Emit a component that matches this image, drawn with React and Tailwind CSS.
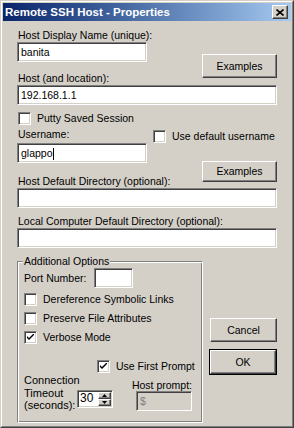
import React from 'react';

const raised = "border border-t-white border-l-white border-r-[#404040] border-b-[#404040] shadow-[inset_-1px_-1px_0_#808080,inset_1px_1px_0_#d4d0c8]";
const sunken = "border border-t-[#808080] border-l-[#808080] border-r-white border-b-white shadow-[inset_1px_1px_0_#404040,inset_-1px_-1px_0_#d4d0c8]";

function Field({ value, className = "", disabled = false }) {
	return (
		<div className={`${sunken} ${disabled ? 'bg-[#d4d0c8] text-[#808080]' : 'bg-white text-black'} h-[20px] pl-[3px] leading-[18px] ${className}`}>
			{value}
		</div>
	);
}

function Check({ checked }) {
	return (
		<div className={`${sunken} bg-white w-[13px] h-[13px] shrink-0 flex items-center justify-center`}>
			{checked && (
				<svg width="7" height="7" viewBox="0 0 7 7">
					<path d="M0 2 L0 4 L2 6 L7 1 L7 -1 L2 4 Z" fill="#000" />
				</svg>
			)}
		</div>
	);
}

function Button({ children, def = false, className = "" }) {
	return (
		<div className={`${def ? 'outline outline-1 outline-black' : ''} ${className}`}>
			<div className={`${raised} bg-[#d4d0c8] h-full flex items-center justify-center`}>{children}</div>
		</div>
	);
}

export default function App() {
	return (
		<div className="w-[294px] h-[428px] bg-[#d4d0c8] border border-t-[#d4d0c8] border-l-[#d4d0c8] border-r-[#404040] border-b-[#404040] text-[10.5px] leading-[13px] text-black overflow-hidden" style={{ fontFamily: '"Liberation Sans", Arial, sans-serif' }}>
			<div className="w-full h-full border border-t-white border-l-white border-r-[#808080] border-b-[#808080] p-[1px]">
				{/* title bar */}
				<div className="h-[18px] bg-gradient-to-r from-[#0a246a] to-[#a6caf0] flex items-center justify-between pl-[2px] pr-[3px]">
					<span className="text-white font-bold text-[11.5px]">Remote SSH Host - Properties</span>
					<div className={`${raised} bg-[#d4d0c8] w-[16px] h-[14px] flex items-center justify-center`}>
						<svg width="8" height="7" viewBox="0 0 8 7">
							<path d="M0.5 0.5 L7.5 6.5 M7.5 0.5 L0.5 6.5" stroke="#000" strokeWidth="1.6" />
						</svg>
					</div>
				</div>

				<div className="pl-[14px] pr-[14px]">
					{/* host name */}
					<div className="flex justify-between mt-[8px]">
						<div className="flex flex-col w-[130px]">
							<span className="pl-[1px] whitespace-nowrap">Host Display Name (unique):</span>
							<Field value="banita" className="w-[130px]" />
							<span className="mt-[10px] pl-[1px] whitespace-nowrap">Host (and location):</span>
						</div>
						<Button className="w-[75px] h-[24px] mt-[25px]">Examples</Button>
					</div>
					<Field value="192.168.1.1" className="w-full" />

					{/* username */}
					<div className="flex items-center gap-[6px] mt-[7px] pl-[1px]">
						<Check />
						<span>Putty Saved Session</span>
					</div>
					<div className="flex justify-between mt-[3px]">
						<div className="flex flex-col w-[130px]">
							<span className="pl-[1px]">Username:</span>
							<Field value={<span>glappo<span className="inline-block w-[1px] h-[12px] bg-black align-middle" /></span>} className="w-[130px] mt-[2px]" />
							<span className="mt-[12px] pl-[1px] whitespace-nowrap">Host Default Directory (optional):</span>
						</div>
						<div className="flex flex-col items-end">
							<div className="flex items-center gap-[6px] mt-[2px] w-[124px]">
								<Check />
								<span className="whitespace-nowrap">Use default username</span>
							</div>
							<Button className="w-[75px] h-[21px] mt-[18px]">Examples</Button>
						</div>
					</div>
					<Field value="" className="w-full" />
					<span className="block mt-[7px] pl-[1px]">Local Computer Default Directory (optional):</span>
					<Field value="" className="w-full" />

					{/* options + buttons */}
					<div className="flex justify-between mt-[13px]">
						<div className="relative w-[186px] h-[162px] border border-t-[#808080] border-l-[#808080] border-r-white border-b-white shadow-[inset_1px_1px_0_#fff,inset_-1px_-1px_0_#808080]">
							<span className="absolute -top-[7px] left-[5px] bg-[#d4d0c8] px-[1px]">Additional Options</span>
							<div className="flex flex-col pl-[6px] pt-[6px]">
								<div className="flex items-center">
									<span className="w-[70px]">Port Number:</span>
									<Field value="" className="w-[39px]" />
								</div>
								<div className="flex items-center gap-[6px] mt-[5px]">
									<Check />
									<span>Dereference Symbolic Links</span>
								</div>
								<div className="flex items-center gap-[6px] mt-[6px]">
									<Check />
									<span>Preserve File Attributes</span>
								</div>
								<div className="flex items-center gap-[6px] mt-[6px]">
									<Check checked />
									<span>Verbose Mode</span>
								</div>
								<div className="flex items-center gap-[6px] mt-[16px] pl-[73px]">
									<Check checked />
									<span>Use First Prompt</span>
								</div>
								<div className="flex justify-between pr-[10px] mt-[1px]">
									<div className="flex items-end">
										<div className="flex flex-col w-[52px] leading-[12.5px] text-[11px]">
											<span>Connection</span>
											<span>Timeout</span>
											<span>(seconds):</span>
										</div>
										<div className={`${sunken} bg-white w-[36px] h-[18px] ml-[1px] mb-[4px] flex items-center justify-between pl-[2px] pr-[1px]`}>
											<span className="text-[12px]">30</span>
											<div className="flex flex-col w-[13px] h-[14px]">
												<div className={`${raised} bg-[#d4d0c8] h-[7px] flex items-center justify-center`}>
													<svg width="5" height="3" viewBox="0 0 5 3"><path d="M2.5 0 L5 3 L0 3 Z" fill="#000" /></svg>
												</div>
												<div className={`${raised} bg-[#d4d0c8] h-[7px] flex items-center justify-center`}>
													<svg width="5" height="3" viewBox="0 0 5 3"><path d="M0 0 L5 0 L2.5 3 Z" fill="#000" /></svg>
												</div>
											</div>
										</div>
									</div>
									<div className="flex flex-col items-end pt-[6px]">
										<span className="leading-[10px]">Host prompt:</span>
										<Field value="$" disabled className="w-[56px] mt-[1px]" />
									</div>
								</div>
							</div>
						</div>
						<div className="flex flex-col pt-[57px]">
							<Button className="w-[67px] h-[24px]">Cancel</Button>
							<Button def className="w-[66px] h-[24px] mt-[8px]">OK</Button>
						</div>
					</div>
				</div>
			</div>
		</div>
	);
}
